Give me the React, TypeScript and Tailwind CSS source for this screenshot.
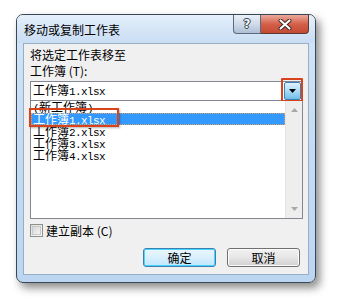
import React from "react";

const cjk = "font-['Noto_Sans_CJK_SC','Noto_Sans',sans-serif]";
const mono = "font-['Liberation_Mono',monospace] text-[11px] tracking-[-0.6px]";

function Xl({ num }: { num: string }) {
  return (
    <span>
      工作簿
      <span className={mono}>{num}.xlsx</span>
    </span>
  );
}

export default function App() {
  return (
    <div className={`w-[337px] h-[299px] bg-white overflow-hidden ${cjk}`}>
      <div className="relative ml-[16px] mt-[14px] w-[300px] h-[269px] rounded-[7px] border border-[#3b4655] bg-gradient-to-b from-[#d3e5f8] via-[#c4dbf3] to-[#bcd6f2] shadow-[4px_5px_9px_rgba(0,0,0,0.45)] flex flex-col">
        {/* title bar */}
        <div className="flex items-start h-[28px] shrink-0 rounded-t-[6px] bg-gradient-to-b from-[#e4effa] to-[#c9ddf3]">
          <span className="ml-[7px] mt-[8px] text-[12px] leading-[13px] text-black">移动或复制工作表</span>
          <div className="ml-auto mr-[6px] flex h-[19px]">
            <div className="w-[28px] h-[19px] rounded-bl-[4px] border border-t-0 border-[#5b6a7e] bg-gradient-to-b from-[#e9f0f8] via-[#cfdbe9] to-[#aebfd4] flex items-center justify-center">
              <span className="font-['DejaVu_Sans',sans-serif] font-bold text-[12px] leading-[12px] text-[#f4f6f8] [text-shadow:0_0_1px_#2b3440,1px_0_0_#3a4656,-1px_0_0_#3a4656,0_1px_0_#3a4656,0_-1px_0_#3a4656]">?</span>
            </div>
            <div className="w-[48px] h-[19px] rounded-br-[4px] border border-t-0 border-l-0 border-[#5b3a36] bg-gradient-to-b from-[#e9a99c] via-[#d4604a] to-[#c24a33] flex items-center justify-center">
              <svg width="14" height="11" viewBox="0 0 14 11">
                <path d="M2.5 1.5 L11.5 9.5 M11.5 1.5 L2.5 9.5" stroke="#3b2320" strokeWidth="4" strokeLinecap="round" />
                <path d="M2.5 1.5 L11.5 9.5 M11.5 1.5 L2.5 9.5" stroke="#ffffff" strokeWidth="2.2" strokeLinecap="round" />
              </svg>
            </div>
          </div>
        </div>
        {/* content */}
        <div className="mx-[6px] mb-[7px] flex-1 border border-[#98aec6] bg-[#f0f0f0] flex flex-col pl-[6px] pr-[5px] text-[12px] text-black">
          <div className="mt-[3px] leading-[16px]">将选定工作表移至</div>
          <div className="leading-[16px]">
            工作簿 (T):
          </div>
          {/* combo */}
          <div className="relative mt-[2px] h-[20px] border border-[#828790] bg-white flex items-center">
            <span className="ml-[2px] leading-[12px]">
              <Xl num="1" />
            </span>
            <div className="absolute right-[1px] top-[0px] w-[17px] h-[18px] border border-[#3c7fb1] rounded-[2px] bg-gradient-to-b from-[#dff2fd] via-[#a9dbf6] to-[#6fbde8] flex items-center justify-center">
              <svg width="7" height="4" viewBox="0 0 7 4">
                <path d="M0 0 L7 0 L3.5 4 Z" fill="#000" />
              </svg>
            </div>
            <div className="absolute -right-[1px] -top-[4px] w-[22px] h-[24px] border-[2px] border-[#d8431d] rounded-[1px]" />
          </div>
          {/* list */}
          <div className="relative h-[118px] border border-t-0 border-[#828790] bg-white flex">
            <div className="flex-1 flex flex-col">
              <div className="h-[12px] leading-[12px] pl-[2px] whitespace-nowrap">
                <span className={mono}>(</span>新工作簿<span className={mono}>)</span>
              </div>
              <div className="h-[12px] leading-[10px] pl-[1px] bg-[#3399ff] text-white border border-dotted border-[#d9a46a] whitespace-nowrap">
                <Xl num="1" />
              </div>
              <div className="h-[12px] leading-[12px] pl-[2px] whitespace-nowrap">
                <Xl num="2" />
              </div>
              <div className="h-[12px] leading-[12px] pl-[2px] whitespace-nowrap">
                <Xl num="3" />
              </div>
              <div className="h-[12px] leading-[12px] pl-[2px] whitespace-nowrap">
                <Xl num="4" />
              </div>
            </div>
            {/* scrollbar */}
            <div className="w-[17px] bg-[#eeeeee] border-l border-[#e4e4e4] flex flex-col items-center justify-between py-[7px]">
              <svg width="7" height="4" viewBox="0 0 7 4">
                <path d="M0 4 L7 4 L3.5 0 Z" fill="#a8a8a8" />
              </svg>
              <svg width="7" height="4" viewBox="0 0 7 4">
                <path d="M0 0 L7 0 L3.5 4 Z" fill="#a8a8a8" />
              </svg>
            </div>
            <div className="absolute -left-[2px] top-[7px] w-[90px] h-[19px] border-[2px] border-[#d8431d] shadow-[1px_1px_2px_rgba(0,0,0,0.3)]" />
          </div>
          {/* checkbox */}
          <div className="mt-[5px] flex items-center h-[13px]">
            <div className="w-[13px] h-[13px] border border-[#8e8f8f] bg-gradient-to-br from-[#dcdcdc] to-[#fbfbfb] p-[1px]">
              <div className="w-full h-full border border-[#c9c9c9] bg-gradient-to-br from-[#d8d8d8] to-[#f4f4f4]" />
            </div>
            <span className="ml-[3px] leading-[13px]">
              建立副本 (C)
            </span>
          </div>
          {/* buttons */}
          <div className="mt-[11px] mr-[3px] flex justify-end gap-[11px]">
            <div className="w-[73px] h-[19px] rounded-[3px] border border-[#3c7fb1] bg-gradient-to-b from-[#eaf6fd] via-[#d9f0fc] to-[#bee6fd] shadow-[inset_0_0_0_1px_#48d4fc] flex items-center justify-center leading-[12px]">
              确定
            </div>
            <div className="w-[73px] h-[19px] rounded-[3px] border border-[#707070] bg-gradient-to-b from-[#f2f2f2] via-[#e6e6e6] to-[#d0d0d0] shadow-[inset_0_0_0_1px_#fcfcfc] flex items-center justify-center leading-[12px]">
              取消
            </div>
          </div>
        </div>
      </div>
    </div>
  );
}
